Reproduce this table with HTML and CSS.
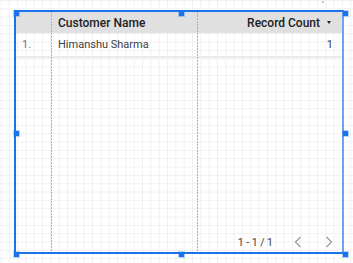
FILE: index.html
```html
<!DOCTYPE html>
<html>
<head>
<meta charset="utf-8">
<link rel="stylesheet" href="styles.css">
</head>
<body>
  <span class="dot"></span>
  <div class="chart">
    <div class="table">
      <div class="row head">
        <div class="cell idx"></div>
        <div class="cell name">Customer Name</div>
        <div class="cell count">Record Count<span class="sort"></span></div>
      </div>
      <div class="row item">
        <div class="cell idx">1.</div>
        <div class="cell name">Himanshu Sharma</div>
        <div class="cell count">1</div>
      </div>
    </div>
    <div class="pager">
      <span class="range">1 - 1 / 1</span>
      <svg class="chev" width="8" height="12" viewBox="0 0 8 12"><polyline points="6.5,1 1.5,6 6.5,11" fill="none" stroke="#a0a0a0" stroke-width="1.4"/></svg>
      <svg class="chev" width="8" height="12" viewBox="0 0 8 12"><polyline points="1.5,1 6.5,6 1.5,11" fill="none" stroke="#a0a0a0" stroke-width="1.4"/></svg>
    </div>

    <span class="guide g1"></span>
    <span class="guide g2"></span>

    <span class="handle h-tl"></span>
    <span class="handle h-tc"></span>
    <span class="handle h-tr"></span>
    <span class="handle h-ml"></span>
    <span class="handle h-mr"></span>
    <span class="handle h-bl"></span>
    <span class="handle h-bc"></span>
    <span class="handle h-br"></span>
  </div>
</body>
</html>
```

FILE: styles.css
```css
html, body {
  margin: 0;
  height: 100%;
}

body {
  position: relative;
  overflow: hidden;
  font-family: Roboto, "Liberation Sans", sans-serif;
  background-color: #fff;
  background-image:
    linear-gradient(to right, #f0f0f0 1px, transparent 1px),
    linear-gradient(to bottom, #f0f0f0 1px, transparent 1px);
  background-size: 8.33px 8.33px;
  background-position: 0.5px 0;
  padding: 10px 0 0 14px;
  box-sizing: border-box;
}

.dot {
  position: absolute;
  left: 322px;
  top: 1px;
  width: 2px;
  height: 2px;
  border-radius: 50%;
  background: #b5b5b5;
}

.chart {
  position: relative;
  width: 330px;
  height: 244px;
  box-sizing: border-box;
  border: 2px solid #1a73e8;
  border-right-color: #6ea2f3;
  display: flex;
  flex-direction: column;
}

.table {
  display: flex;
  flex-direction: column;
}

.row {
  display: grid;
  grid-template-columns: 35px 146px 1fr;
  align-items: center;
}

.head {
  height: 21px;
  background: #e0e0e0;
  font-size: 12px;
  font-weight: 500;
  color: #202124;
}

.item {
  height: 23px;
  border-bottom: 2px solid #ebebeb;
  font-size: 11px;
  color: #3c4043;
}

.cell {
  white-space: nowrap;
}

.idx {
  padding-left: 6px;
  color: #70757a;
}

.name {
  padding-left: 7px;
}

.count {
  text-align: right;
  padding-right: 9px;
  display: flex;
  justify-content: flex-end;
  align-items: center;
}

.head .count {
  padding-right: 11px;
}

.sort {
  display: inline-block;
  margin-left: 7px;
  width: 0;
  height: 0;
  border-left: 2.5px solid transparent;
  border-right: 2.5px solid transparent;
  border-top: 3px solid #202124;
}

.pager {
  margin-top: auto;
  height: 20px;
  display: flex;
  align-items: center;
  justify-content: flex-end;
  padding-right: 9px;
  font-size: 10.5px;
  color: #3c4043;
}

.range {
  margin-right: 21px;
}

.chev + .chev {
  margin-left: 23px;
}

/* column resize guides */
.guide {
  position: absolute;
  top: 0;
  bottom: 0;
  width: 1px;
  background: repeating-linear-gradient(to bottom, #8ab4f8 0 2px, transparent 2px 3px);
}

.g1 { left: 35px; }
.g2 { left: 181px; }

.handle {
  position: absolute;
  width: 5px;
  height: 5px;
  background: #1a73e8;
  box-shadow: 0 0 0 1px rgba(26, 115, 232, 0.3);
}

.h-tl { left: -2px; top: -1px; }
.h-tc { left: 163px; top: -1px; }
.h-tr { left: 327px; top: -1px; }
.h-ml { left: -2px; top: 119px; }
.h-mr { left: 327px; top: 119px; }
.h-bl { left: -2px; top: 240px; }
.h-bc { left: 163px; top: 240px; }
.h-br { left: 327px; top: 240px; }
```
